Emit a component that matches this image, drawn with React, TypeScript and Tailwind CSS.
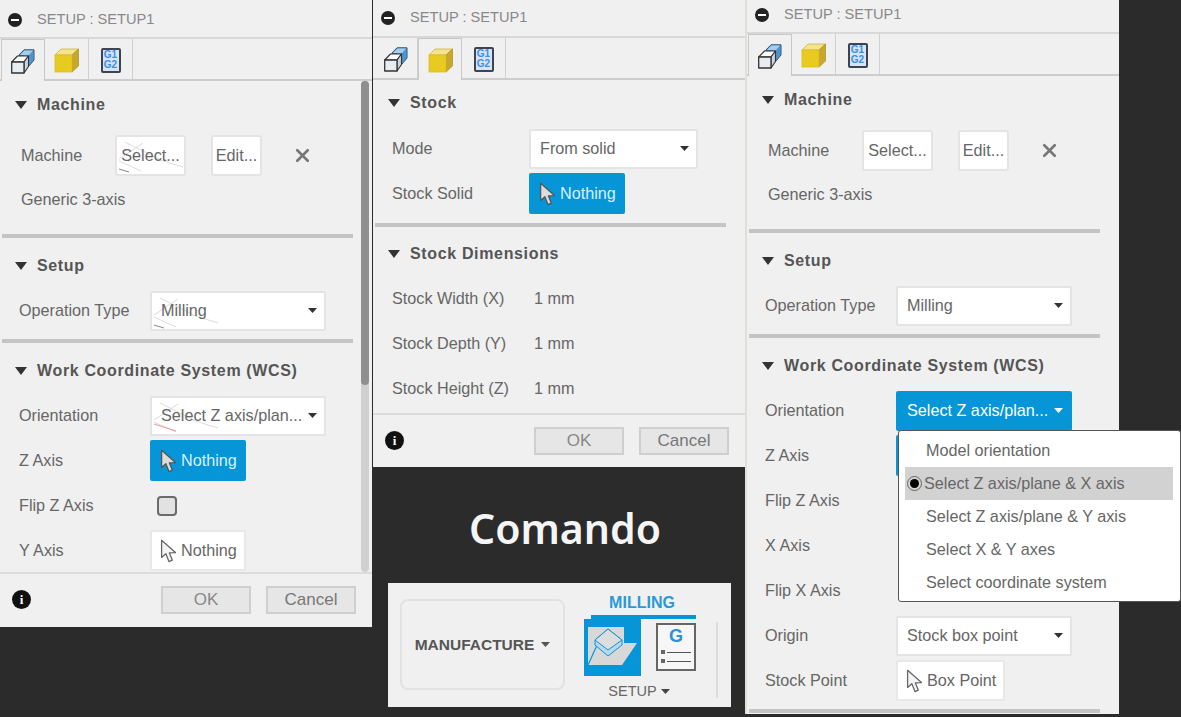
import React from "react";
import { X } from "lucide-react";

const Tri = ({ className = "fill-[#333333]" }: { className?: string }) => (
  <svg width="9" height="5" viewBox="0 0 9 5" className={"shrink-0 " + className}><polygon points="0,0 9,0 4.5,5" /></svg>
);

const Header = ({ children, box }: { children: React.ReactNode; box: string }) => (
  <div className={"flex items-center pl-[15px] " + box}>
    <svg width="12" height="8" viewBox="0 0 12 8" className="fill-[#333333] shrink-0"><polygon points="0,0 12,0 6,8" /></svg>
    <span className="ml-[10px] text-[16px] font-bold tracking-[0.65px] text-[#555555] whitespace-nowrap">{children}</span>
  </div>
);

const Divider = ({ m }: { m: string }) => <div className={"w-[351px] ml-[2px] h-[4px] bg-[#c4c4c4] " + m} />;

const Cursor = ({ fill, stroke }: { fill: string; stroke: string }) => (
  <svg width="16" height="24" viewBox="0 0 15 22" className="shrink-0">
    <path d="M1.5 1 L1.5 17 L5.5 13.5 L8.5 21 L11.5 19.5 L8.8 12.8 L14.5 12.5 Z" fill={fill} stroke={stroke} strokeWidth="1.2" strokeLinejoin="round" />
  </svg>
);

const Row = ({ label, pad, w, h = "h-[45px]", children }: { label: string; pad: string; w: string; h?: string; children?: React.ReactNode }) => (
  <div className={"flex items-center " + h + " " + pad}>
    <div className={"shrink-0 text-[16.2px] text-[#666666] " + w}>{label}</div>
    {children}
  </div>
);

const Sel = ({ text, w, mark, active }: { text: string; w: string; mark?: React.ReactNode; active?: boolean }) => (
  <div className={"relative flex items-center justify-between h-[40px] pl-[9px] pr-[7px] rounded-[2px] border-2 " + w + (active ? " bg-[#0696d7] border-[#0696d7] text-white" : " bg-white border-[#e4e4e4] text-[#666666]")}>
    {mark}
    <span className="text-[16.2px] whitespace-nowrap relative">{text}</span>
    <Tri className={active ? "fill-white" : "fill-[#333333]"} />
  </div>
);

const Pick = ({ text, active, w = "w-[96px]" }: { text: string; active?: boolean; w?: string }) => (
  <div className={"flex items-center h-[41px] pl-[8px] gap-[5px] rounded-[2px] border-2 " + w + (active ? " bg-[#0696d7] border-[#0696d7] text-[#d8f0ff]" : " bg-white border-[#e8e8e8] text-[#666666]")}>
    {active ? <Cursor fill="#dcdcdc" stroke="#555555" /> : <Cursor fill="#f4f4f4" stroke="#666666" />}
    <span className="text-[16.2px] whitespace-nowrap">{text}</span>
  </div>
);

const Btn = ({ text, w, mark }: { text: string; w: string; mark?: React.ReactNode }) => (
  <div className={"relative flex items-center justify-center h-[41px] bg-white border-2 border-[#e4e4e4] rounded-[3px] text-[16.2px] text-[#666666] " + w}>
    {mark}
    <span className="relative">{text}</span>
  </div>
);

const Check = () => <div className="ml-[7px] w-[20px] h-[20px] rounded-[4px] bg-[#e2e2e2] border-2 border-[#6b6b6b]" />;

const IconSetup = () => (
  <svg width="24" height="25" viewBox="0 0 24 25">
    <path d="M8 6 L13 0.8 L23 0.8 L23 11 L18 17 L13 17 L13 7 L8 7 Z" fill="#5b9fd6" stroke="#2f4f6b" strokeWidth="1" />
    <path d="M9 6 L13.5 1.5 L22 1.5 L18 6 Z" fill="#a6cdeb" />
    <path d="M18 6.5 L22.3 1.8 L22.3 10.8 L18 16 Z" fill="#4f93cc" />
    <path d="M0.7 13 L6.5 7 L17.5 7 L13 13 Z" fill="#ffffff" stroke="#333333" strokeWidth="1.1" strokeLinejoin="round" />
    <path d="M13 13 L17.5 7 L17.5 17.5 L13 24 Z" fill="#c9d6e2" stroke="#333333" strokeWidth="1.1" strokeLinejoin="round" />
    <path d="M0.7 13 L13 13 L13 24 L0.7 24 Z" fill="#e8ebef" stroke="#333333" strokeWidth="1.3" strokeLinejoin="round" />
  </svg>
);

const IconCube = () => (
  <svg width="25" height="25" viewBox="0 0 25 25">
    <path d="M1 7 L7 1 L24.5 1 L18 7 Z" fill="#f4e38f" stroke="#cfb23a" strokeWidth="0.8" />
    <path d="M18 7 L24.5 1 L24.5 18 L18 24 Z" fill="#c7a72c" stroke="#b3962a" strokeWidth="0.8" />
    <rect x="1" y="7" width="17" height="17" fill="#e9cb1f" stroke="#d9bb2a" strokeWidth="0.8" />
  </svg>
);

const IconG = () => (
  <div className="w-[20px] h-[25px] border-2 border-[#3d4450] rounded-[2px] bg-[#d5e4f7] flex flex-col items-center justify-center text-[10px] leading-[10px] font-bold text-[#3d8fe8]">
    <span>G1</span>
    <span>G2</span>
  </div>
);

const Tabs = ({ active }: { active: number }) => {
  const icons = [<IconSetup key="a" />, <IconCube key="b" />, <IconG key="c" />];
  return (
    <div className="relative flex h-[42px] border-b-2 border-[#cdcdcd] pl-[1px]">
      {icons.map((ic, i) => (
        <div
          key={i}
          className={
            "flex items-center justify-center w-[44px] pt-[2px] " +
            (active === i ? "h-[42px] bg-[#f0f0f0] border border-b-0 border-[#c8c8c8] relative" : "h-[40px] border-r border-[#d0d0d0]")
          }
        >
          {ic}
        </div>
      ))}
    </div>
  );
};

const Info = () => (
  <div className="w-[19px] h-[19px] rounded-full bg-[#111111] flex items-center justify-center text-white font-bold text-[13px] leading-none font-['Liberation_Serif',serif]">i</div>
);

const Footer = ({ box }: { box: string }) => (
  <div className={"relative z-10 flex items-start justify-between bg-[#f0f0f0] border-t-2 border-[#dcdcdc] pl-[12px] pr-[16px] " + box}>
    <div className="mt-[16px]"><Info /></div>
    <div className="flex gap-[15px] mt-[12px]">
      <div className="w-[90px] h-[28px] bg-[#e6e6e6] border-2 border-[#cfcfcf] flex items-center justify-center text-[17px] text-[#888888]">OK</div>
      <div className="w-[90px] h-[28px] bg-[#e6e6e6] border-2 border-[#cfcfcf] flex items-center justify-center text-[17px] text-[#777777]">Cancel</div>
    </div>
  </div>
);

const Title = ({ box }: { box: string }) => (
  <div className={"flex items-center pl-[8px] border-b-2 border-[#d8d8d8] " + box}>
    <div className="w-[14px] h-[14px] rounded-full bg-[#222222] flex items-center justify-center shrink-0">
      <div className="w-[8px] h-[2px] bg-white" />
    </div>
    <span className="ml-[15px] text-[14.6px] text-[#888888] whitespace-nowrap">SETUP : SETUP1</span>
  </div>
);

const Scratch = ({ red }: { red?: boolean }) => (
  <svg className="absolute left-0 top-0" width="70" height="38" viewBox="0 0 70 38" fill="none">
    <path d="M2 22 L26 6 M8 5 L42 22 M2 24 L24 34 M40 22 L66 30" stroke="#dcdcdc" strokeWidth="1" />
    {red ? <path d="M2 26 L24 33" stroke="#e9a0a8" strokeWidth="1.2" /> : <path d="M2 32 L12 35" stroke="#888888" strokeWidth="1" />}
  </svg>
);

const MachineBlock = ({ mark }: { mark?: boolean }) => (
  <>
    <Header box="h-[48px]">Machine</Header>
    <div className="flex items-center h-[52px] pl-[21px]">
      <div className="w-[94px] shrink-0 text-[16.2px] text-[#666666]">Machine</div>
      <Btn text="Select..." w="w-[71px]" mark={mark ? <Scratch /> : undefined} />
      <Btn text="Edit..." w="w-[51px] ml-[25px]" />
      <X size={21} strokeWidth={3} className="ml-[30px] text-[#777777]" />
    </div>
    <div className="flex items-center h-[36px] pl-[21px] text-[16.2px] text-[#666666]">Generic 3-axis</div>
  </>
);

const Left = () => (
  <div className="w-[372px] h-[627px] mr-[1px] shrink-0 bg-[#f0f0f0] flex flex-col">
    <Title box="h-[39px] pt-[3px]" />
    <Tabs active={0} />
    <div className="flex-1 min-h-0 flex">
      <div className="flex-1 min-w-0">
        <MachineBlock mark />
        <Divider m="mt-[17px]" />
        <Header box="h-[50px] pt-[6px]">Setup</Header>
        <Row label="Operation Type" pad="pl-[19px]" w="w-[131px]">
          <Sel text="Milling" w="w-[176px]" mark={<Scratch />} />
        </Row>
        <Divider m="mt-[6px]" />
        <Header box="h-[50px] pt-[6px]">Work Coordinate System (WCS)</Header>
        <Row label="Orientation" pad="pl-[19px]" w="w-[131px]">
          <Sel text="Select Z axis/plan..." w="w-[176px]" mark={<Scratch red />} />
        </Row>
        <Row label="Z Axis" pad="pl-[19px]" w="w-[131px]"><Pick text="Nothing" active /></Row>
        <Row label="Flip Z Axis" pad="pl-[19px]" w="w-[131px]"><Check /></Row>
        <Row label="Y Axis" pad="pl-[19px]" w="w-[131px]"><Pick text="Nothing" /></Row>
      </div>
      <div className="w-[8px] mr-[3px] shrink-0 rounded-[4px] bg-[#d0d0d0]">
        <div className="h-[304px] rounded-[4px] bg-[#8f8f8f]" />
      </div>
    </div>
    <Footer box="h-[55px]" />
  </div>
);

const Ribbon = () => (
  <div className="ml-[15px] w-[343px] h-[124px] bg-[#f0f0f0] flex">
    <div className="ml-[12px] mt-[16px] w-[165px] h-[91px] rounded-[8px] border-2 border-[#e2e2e2] flex items-center justify-center gap-[7px]">
      <span className="text-[15.5px] font-bold text-[#555555]">MANUFACTURE</span>
      <Tri className="fill-[#555555]" />
    </div>
    <div className="ml-[19px] w-[112px] flex flex-col">
      <div className="h-[32px] flex items-end justify-center pl-[4px] text-[16px] font-bold text-[#2a9ad6]">MILLING</div>
      <div className="ml-[7px] h-[4px] bg-[#0696d7]" />
      <div className="flex">
        <div className="w-[57px] h-[57px] bg-[#0696d7]">
          <svg width="57" height="57" viewBox="0 0 57 57">
            <path d="M4 8 L40 8 L40 24 L53 24 L38 46 L4 46 Z" fill="#d8d8d8" />
            <path d="M4 46 L14 24" fill="none" stroke="#0696d7" strokeWidth="1.2" />
            <path d="M11 21 L24 10 L38 21 L38 26 L24 37 L11 26 Z" fill="#b9d8ea" stroke="#0696d7" strokeWidth="1" />
            <path d="M11 21 L24 10 L38 21 L24 31 Z" fill="#dddddd" stroke="#0696d7" strokeWidth="1" />
          </svg>
        </div>
        <div className="ml-[15px] mt-[4px] w-[41px] h-[48px] border-2 border-[#666666] bg-[#f6f6f6] flex flex-col items-center">
          <span className="text-[18px] leading-[22px] font-bold text-[#2a90dc]">G</span>
          <div className="mt-[3px] w-[30px] flex items-center gap-[2px]"><div className="w-[4px] h-[4px] bg-[#666666]" /><div className="flex-1 h-[1px] bg-[#555555]" /></div>
          <div className="mt-[5px] w-[30px] flex items-center gap-[2px]"><div className="w-[4px] h-[4px] bg-[#666666]" /><div className="flex-1 h-[1px] bg-[#555555]" /></div>
        </div>
      </div>
      <div className="mt-[5px] flex items-center justify-center gap-[4px] pr-[2px] text-[14.5px] text-[#666666]">
        <span>SETUP</span>
        <Tri className="fill-[#444444]" />
      </div>
    </div>
    <div className="ml-[20px] mt-[39px] w-[2px] h-[76px] bg-[#dcdcdc]" />
  </div>
);

const Middle = () => (
  <div className="w-[372px] shrink-0 flex flex-col">
    <div className="h-[467px] bg-[#f0f0f0] flex flex-col">
      <Title box="h-[38px]" />
      <Tabs active={1} />
      <div className="flex-1 min-h-0">
        <Header box="h-[46px]">Stock</Header>
        <Row label="Mode" pad="pl-[19px]" w="w-[137px]"><Sel text="From solid" w="w-[169px]" /></Row>
        <Row label="Stock Solid" pad="pl-[19px]" w="w-[137px]"><Pick text="Nothing" active /></Row>
        <Divider m="mt-[7px]" />
        <Header box="h-[49px] pt-[4px]">Stock Dimensions</Header>
        <Row label="Stock Width (X)" pad="pl-[19px]" w="w-[142px]"><span className="text-[16.2px] text-[#666666]">1 mm</span></Row>
        <Row label="Stock Depth (Y)" pad="pl-[19px]" w="w-[142px]"><span className="text-[16.2px] text-[#666666]">1 mm</span></Row>
        <Row label="Stock Height (Z)" pad="pl-[19px]" w="w-[142px]"><span className="text-[16.2px] text-[#666666]">1 mm</span></Row>
      </div>
      <Footer box="h-[54px]" />
    </div>
    <div className="h-[116px] flex items-center justify-center pl-[12px] pt-[8px] text-[41px] font-semibold text-[#f5f5f5] font-['Noto_Sans',sans-serif]">Comando</div>
    <Ribbon />
  </div>
);

const Menu = () => (
  <div className="absolute left-[2px] top-[39px] z-20 w-[283px] h-[172px] rounded-[3px] bg-white border border-[#555555] pt-[3px] pl-[6px] pr-[7px] text-[16.2px] text-[#666666]">
    <div className="h-[33px] flex items-center pl-[21px]">Model orientation</div>
    <div className="h-[33px] flex items-center bg-[#d2d2d2]">
      <div className="ml-[2px] w-[15px] h-[15px] rounded-full border border-[#666666] flex items-center justify-center">
        <div className="w-[9px] h-[9px] rounded-full bg-black" />
      </div>
      <span className="ml-[2px]">Select Z axis/plane &amp; X axis</span>
    </div>
    <div className="h-[33px] flex items-center pl-[21px]">Select Z axis/plane &amp; Y axis</div>
    <div className="h-[33px] flex items-center pl-[21px]">Select X &amp; Y axes</div>
    <div className="h-[33px] flex items-center pl-[21px]">Select coordinate system</div>
  </div>
);

const Right = () => (
  <div className="w-[374px] shrink-0 h-[714px] bg-[#f0f0f0] border-l-2 border-[#e0e0d8] flex flex-col">
    <Title box="h-[34px] pb-[3px]" />
    <Tabs active={0} />
    <div className="flex-1 min-h-0">
      <MachineBlock />
      <Divider m="mt-[17px]" />
      <Header box="h-[50px] pt-[6px]">Setup</Header>
      <Row label="Operation Type" pad="pl-[18px]" w="w-[131px]"><Sel text="Milling" w="w-[176px]" /></Row>
      <Divider m="mt-[6px]" />
      <Header box="h-[50px] pt-[6px]">Work Coordinate System (WCS)</Header>
      <Row label="Orientation" pad="pl-[18px]" w="w-[131px]">
        <div className="relative">
          <Sel text="Select Z axis/plan..." w="w-[176px]" active />
          <Menu />
        </div>
      </Row>
      <Row label="Z Axis" pad="pl-[18px]" w="w-[131px]"><div className="w-[96px] h-[41px] rounded-[2px] bg-[#0696d7]" /></Row>
      <Row label="Flip Z Axis" pad="pl-[18px]" w="w-[131px]" />
      <Row label="X Axis" pad="pl-[18px]" w="w-[131px]" />
      <Row label="Flip X Axis" pad="pl-[18px]" w="w-[131px]" />
      <Row label="Origin" pad="pl-[18px]" w="w-[131px]"><Sel text="Stock box point" w="w-[176px]" /></Row>
      <Row label="Stock Point" pad="pl-[18px]" w="w-[131px]"><Pick text="Box Point" w="w-[109px]" /></Row>
      <Divider m="mt-[6px]" />
    </div>
  </div>
);

export default function App() {
  return (
    <div className="w-[1181px] h-[717px] overflow-hidden bg-[#2b2b2b] flex font-['Liberation_Sans',Arial,sans-serif]">
      <Left />
      <Middle />
      <Right />
    </div>
  );
}
